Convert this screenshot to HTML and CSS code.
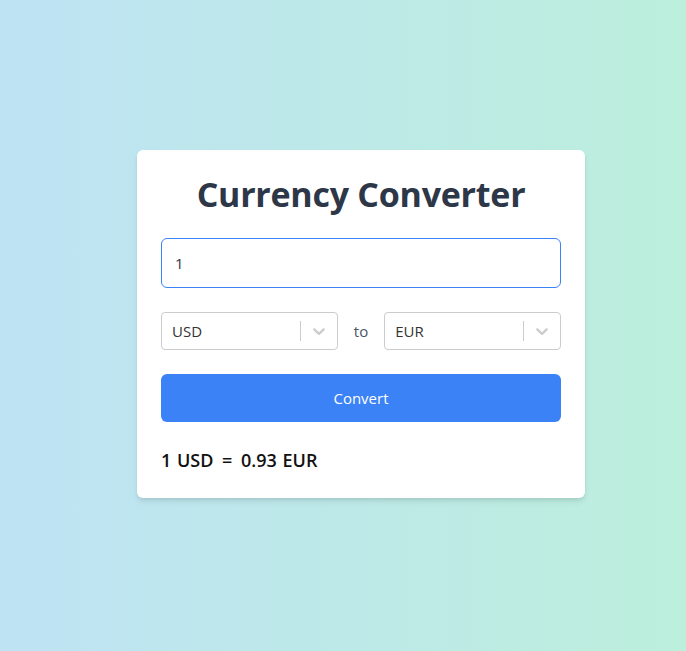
FILE: index.html
```html
<!DOCTYPE html>
<html lang="en">
<head>
<meta charset="utf-8">
<title>Currency Converter</title>
<link rel="stylesheet" href="styles.css">
</head>
<body>
<main class="page">
  <section class="card">
    <h1 class="title">Currency Converter</h1>
    <input class="amount" type="text" value="1">
    <div class="pair">
      <div class="select">
        <span class="select-value">USD</span>
        <span class="select-sep"></span>
        <span class="select-arrow"><svg width="20" height="20" viewBox="0 0 20 20"><path d="M4.516 7.548c0.436-0.446 1.043-0.481 1.576 0l3.908 3.747 3.908-3.747c0.533-0.481 1.141-0.446 1.574 0 0.436 0.445 0.408 1.197 0 1.615-0.406 0.418-4.695 4.502-4.695 4.502-0.217 0.223-0.502 0.335-0.787 0.335s-0.57-0.112-0.789-0.335c0 0-4.287-4.084-4.695-4.502s-0.436-1.17 0-1.615z" fill="#cccccc"/></svg></span>
      </div>
      <span class="to">to</span>
      <div class="select">
        <span class="select-value">EUR</span>
        <span class="select-sep"></span>
        <span class="select-arrow"><svg width="20" height="20" viewBox="0 0 20 20"><path d="M4.516 7.548c0.436-0.446 1.043-0.481 1.576 0l3.908 3.747 3.908-3.747c0.533-0.481 1.141-0.446 1.574 0 0.436 0.445 0.408 1.197 0 1.615-0.406 0.418-4.695 4.502-4.695 4.502-0.217 0.223-0.502 0.335-0.787 0.335s-0.57-0.112-0.789-0.335c0 0-4.287-4.084-4.695-4.502s-0.436-1.17 0-1.615z" fill="#cccccc"/></svg></span>
      </div>
    </div>
    <button class="convert" type="button">Convert</button>
    <p class="result">1 USD <span class="eq">=</span> 0.93 EUR</p>
  </section>
</main>
</body>
</html>
```
FILE: styles.css
```css
* { box-sizing: border-box; }
html, body { margin: 0; padding: 0; }
body {
  font-family: "Open Sans", "Noto Sans", "DejaVu Sans", sans-serif;
  background: linear-gradient(to right, #bee3f4, #bcefdc);
  min-height: 100vh;
}
.page {
  min-height: 100vh;
  display: flex;
  align-items: center;
  justify-content: center;
  padding-left: 36px;
  padding-bottom: 3px;
}
.card {
  width: 448px;
  background: #ffffff;
  border-radius: 6px;
  box-shadow: 0 4px 6px -1px rgba(0,0,0,0.1), 0 2px 4px -1px rgba(0,0,0,0.06);
  padding: 24px;
  display: flex;
  flex-direction: column;
  gap: 24px;
}
.title {
  margin: 0;
  text-align: center;
  font-size: 34px;
  line-height: 40px;
  font-weight: 700;
  color: #2d3748;
  letter-spacing: -0.25px;
}
.amount {
  display: block;
  width: 100%;
  height: 50px;
  border: 1px solid #3b82f6;
  border-radius: 6px;
  padding: 0 13px;
  font-family: inherit;
  font-size: 15px;
  color: #2d3748;
  outline: none;
}
.pair {
  display: flex;
  align-items: center;
  gap: 16px;
}
.select {
  flex: 1;
  height: 38px;
  border: 1px solid #cccccc;
  border-radius: 4px;
  display: flex;
  align-items: center;
  background: #fff;
}
.select-value {
  flex: 1;
  padding-left: 10px;
  font-size: 15px;
  color: #333333;
}
.select-sep {
  width: 1px;
  height: 20px;
  background: #cccccc;
}
.select-arrow {
  width: 36px;
  display: flex;
  align-items: center;
  justify-content: center;
}
.to {
  font-size: 15px;
  color: #4a5568;
}
.convert {
  height: 48px;
  border: none;
  border-radius: 6px;
  background: #3b82f6;
  color: #ffffff;
  font-family: inherit;
  font-size: 15px;
}
.result {
  margin: 0;
  font-size: 18px;
  line-height: 28px;
  font-weight: 600;
  word-spacing: 1px;
  color: #111111;
}
.eq {
  margin: 0 3px;
}
```
